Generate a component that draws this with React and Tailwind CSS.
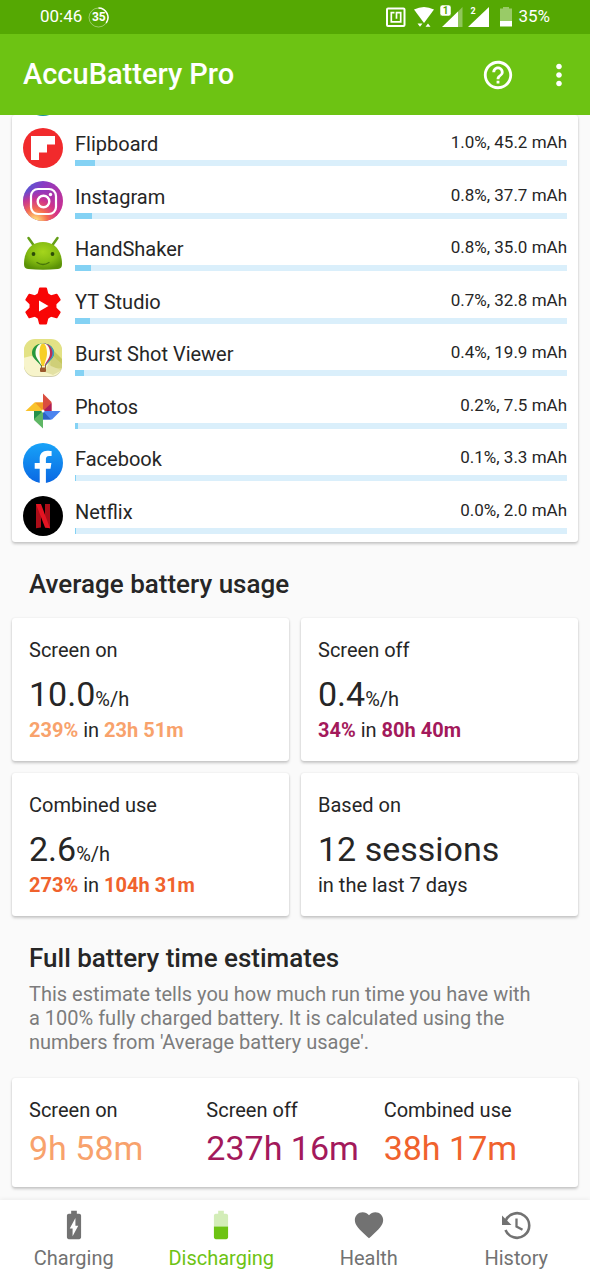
import { MdBattery50, MdBatteryChargingFull, MdFavorite, MdHelpOutline, MdMoreVert } from 'react-icons/md';

const FlipboardIcon = () => (
    <svg viewBox="0 0 40 40" className="size-10">
        <circle cx="20" cy="20" r="20" fill="#f12a2c" />
        <path d="M8 8h24v8.5h-8v8h-8V32H8z" fill="#fff" />
    </svg>
);

const InstagramIcon = () => (
    <svg viewBox="0 0 40 40" className="size-10">
        <defs>
            <linearGradient id="igBase" x1="0" y1="0.1" x2="1" y2="0.8">
                <stop offset="0" stopColor="#4a5fd8" />
                <stop offset="0.35" stopColor="#8b3ac2" />
                <stop offset="1" stopColor="#cf2f8c" />
            </linearGradient>
            <radialGradient id="igGlow" cx="0.3" cy="1.02" r="0.8">
                <stop offset="0.1" stopColor="#ffd776" />
                <stop offset="0.4" stopColor="#f9704a" stopOpacity="0.95" />
                <stop offset="0.7" stopColor="#dc3580" stopOpacity="0.8" />
                <stop offset="1" stopColor="#c32aa3" stopOpacity="0" />
            </radialGradient>
        </defs>
        <circle cx="20" cy="20" r="20" fill="url(#igBase)" />
        <circle cx="20" cy="20" r="20" fill="url(#igGlow)" />
        <rect x="8" y="8" width="25" height="25" rx="7" fill="none" stroke="#fff" strokeWidth="2.2" />
        <circle cx="20.5" cy="20.5" r="5.8" fill="none" stroke="#fff" strokeWidth="2.4" />
        <circle cx="27.5" cy="13.5" r="1.7" fill="#fff" />
    </svg>
);

const HandShakerIcon = () => (
    <svg viewBox="0 0 40 40" className="size-10">
        <defs>
            <radialGradient id="droid" cx="0.5" cy="0.35" r="0.65">
                <stop offset="0" stopColor="#a5d51c" />
                <stop offset="0.6" stopColor="#84bb12" />
                <stop offset="1" stopColor="#5b9206" />
            </radialGradient>
        </defs>
        <path d="M5.5 5l5 7M34.500 5l-5 7" stroke="#649e18" strokeWidth="2.500" strokeLinecap="round" />
        <path d="M1 31C1 17 9 9 20 9s19 8 19 22c0 3-1 4.500-4 5-10 1-20 1-30 0-3-.5-4-2-4-5z" fill="url(#droid)" />
        <circle cx="10.500" cy="21" r="1.900" fill="#2c4c08" />
        <circle cx="29.500" cy="21" r="1.900" fill="#2c4c08" />
        <path d="M14 29.500q6 4 12 0" fill="none" stroke="#47750a" strokeWidth="1.300" strokeLinecap="round" />
    </svg>
);

const StudioIcon = () => (
    <svg viewBox="0 0 40 40" className="size-10">
        <g fill="#f80606" stroke="#f80606" strokeLinejoin="round" strokeWidth="2">
            <circle cx="20" cy="20" r="12.500" />
            {[0, 60, 120].map((angle) => (
                <path key={angle} d="M17 2.500h6l2 8v19l-2 8h-6l-2-8v-19z" transform={`rotate(${angle} 20 20)`} />
            ))}
        </g>
        <path d="M16 14.500v11l9.500-5.500z" fill="#fff" />
    </svg>
);

const BurstIcon = () => (
    <svg viewBox="0 0 40 40" className="size-10">
        <defs>
            <clipPath id="burstClip"><rect x="1" y="1" width="38" height="37" rx="11" /></clipPath>
        </defs>
        <rect x="1" y="2" width="38" height="37" rx="11" fill="#cfcdb0" />
        <g clipPath="url(#burstClip)">
            <rect width="40" height="40" fill="#e3e285" />
            <path d="M29 11l11 11v8H27z" fill="#c6c85e" />
            <path d="M0 20l8-2q14 3 20 10l12 5v7H0z" fill="#f7f4cb" />
            <path d="M29 17l10 9v6l-9 5-8-3z" fill="#d6d48a" opacity="0.6" />
        </g>
        <path d="M20 5.500C12.500 5.500 9 10.500 9 15c0 5.500 6 8 9 13h4.500c3-5 8.500-7.500 8.500-13 0-4.500-3.500-9.500-11-9.500z" fill="#27983c" />
        <path d="M20 5.500c7.500 0 11 5 11 9.500 0 5.500-5.500 8-8.500 13H20z" fill="#3b9ecb" />
        <path d="M20 5.500c6.500 0 9.500 5 9.500 9.500 0 5.500-5 8-7.500 13h-2z" fill="#b92f56" />
        <path d="M20 5.500c-5 0-7.500 5-7.500 9.500 0 5.500 4.500 8 6 13h3c1.500-5 5.500-7.500 5.500-13 0-4.500-2-9.500-7-9.500z" fill="#fffdf0" />
        <path d="M20 5.500c-2.500 0-3.500 5-3.500 9.500 0 5.500 1.500 8 2 13h2.500c1-5 3-7.500 3-13 0-4.500-1.500-9.500-4-9.500z" fill="#f7cf25" />
        <path d="M18.500 27v3M22.500 27v3" stroke="#8b6a3f" />
        <rect x="17" y="29.500" width="6" height="4.500" rx="1" fill="#9b592d" />
    </svg>
);

const PhotosIcon = () => (
    <svg viewBox="0 0 40 40" className="size-10">
        <path d="M20 20V2.500l8.500 8.500v9z" fill="#da4d3f" />
        <path d="M20 20l8.500-8v8z" fill="#ad1d58" />
        <path d="M20 20h17.500L29 28.500h-9z" fill="#4c84ee" />
        <path d="M20 20l8 8.500h-8z" fill="#2c63c5" />
        <path d="M20 20v17.500L11 29v-9z" fill="#5fb765" />
        <path d="M20 20l-9 8v-8z" fill="#23904b" />
        <path d="M20 20H2.500l9-8.500H20z" fill="#fac32b" />
        <path d="M20 20l-8-8.500h8z" fill="#f19a24" />
        <circle cx="20" cy="20" r="1.500" fill="#fff" />
    </svg>
);

const FacebookIcon = () => (
    <svg viewBox="0 0 40 40" className="size-10">
        <defs>
            <linearGradient id="fb" x1="0" y1="0" x2="0" y2="1">
                <stop offset="0" stopColor="#18a3f8" />
                <stop offset="1" stopColor="#0a68e3" />
            </linearGradient>
        </defs>
        <circle cx="20" cy="20" r="20" fill="url(#fb)" />
        <path d="M16.700 40V25.800h-5V20h5v-4.500c0-5 3-7.800 7.500-7.800 2.200 0 4.400.4 4.400.4v5h-2.500c-2.500 0-3.200 1.500-3.200 3.100V20h5.500l-.9 5.800h-4.600V40q-3 .4-6.200 0z" fill="#fff" />
    </svg>
);

const NetflixIcon = () => (
    <svg viewBox="0 0 40 40" className="size-10">
        <circle cx="20" cy="20" r="20" fill="#000" />
        <path d="M13 8h5v23.500l-5 .7zM22 8h5v24.200l-5-.7z" fill="#ab0d18" />
        <path d="M13 8h5l9 24.200-5-.7z" fill="#e41422" />
    </svg>
);

const HistoryIcon = () => (
    <svg viewBox="0 0 34 34" className="size-[34px]">
        <path d="M6.500 13A12.300 12.300 0 1 1 6.500 22" fill="none" stroke="#727272" strokeWidth="2.600" />
        <path d="M3 7.500v9.500h9.500z" fill="#727272" />
        <path d="M17.500 10.500v8l6 3.300" fill="none" stroke="#727272" strokeWidth="2.300" />
    </svg>
);

const apps = [
    { name: 'Flipboard', usage: '1.0%, 45.2 mAh', fill: 20, Icon: FlipboardIcon },
    { name: 'Instagram', usage: '0.8%, 37.7 mAh', fill: 17, Icon: InstagramIcon },
    { name: 'HandShaker', usage: '0.8%, 35.0 mAh', fill: 16, Icon: HandShakerIcon },
    { name: 'YT Studio', usage: '0.7%, 32.8 mAh', fill: 15, Icon: StudioIcon },
    { name: 'Burst Shot Viewer', usage: '0.4%, 19.9 mAh', fill: 9, Icon: BurstIcon },
    { name: 'Photos', usage: '0.2%, 7.5 mAh', fill: 3, Icon: PhotosIcon },
    { name: 'Facebook', usage: '0.1%, 3.3 mAh', fill: 1, Icon: FacebookIcon },
    { name: 'Netflix', usage: '0.0%, 2.0 mAh', fill: 1, Icon: NetflixIcon },
];

const averages = [
    { label: 'Screen on', value: '10.0', percent: '239%', time: '23h 51m', color: 'text-[#f8a26c]' },
    { label: 'Screen off', value: '0.4', percent: '34%', time: '80h 40m', color: 'text-[#a3195b]' },
    { label: 'Combined use', value: '2.6', percent: '273%', time: '104h 31m', color: 'text-[#f0622d]' },
];

const estimates = [
    { label: 'Screen on', value: '9h 58m', color: 'text-[#f8a26c]' },
    { label: 'Screen off', value: '237h 16m', color: 'text-[#a3195b]' },
    { label: 'Combined use', value: '38h 17m', color: 'text-[#f0622d]' },
];

const tabs = [
    { label: 'Charging', icon: <MdBatteryChargingFull size={34} /> },
    { label: 'Discharging', icon: <MdBattery50 size={34} />, active: true },
    { label: 'Health', icon: <MdFavorite size={34} /> },
    { label: 'History', icon: <HistoryIcon /> },
];

function Card({ className = '', children }) {
    return (
        <div className={`bg-white rounded-[3px] shadow-[0_2px_3px_rgba(0,0,0,0.2),0_0_2px_rgba(0,0,0,0.1)] ${className}`}>
            {children}
        </div>
    );
}

function StatusBar() {
    return (
        <div className="h-[34px] bg-[#55a803] text-white flex items-center justify-between px-10">
            <div className="flex items-center gap-1.5 text-[17px]">
                <span>00:46</span>
                <span className="relative flex size-[21px] items-center justify-center text-[12px] font-bold">
                    <svg viewBox="0 0 21 21" className="absolute inset-0">
                        <circle cx="10.500" cy="10.500" r="9.500" fill="none" stroke="#fff" strokeOpacity="0.4" />
                        <path d="M10.500 1A9.500 9.500 0 0 1 18.200 16" fill="none" stroke="#fff" strokeWidth="1.500" />
                    </svg>
                    35
                </span>
            </div>
            <div className="flex items-center">
                {/* NFC, wifi, both SIMs, battery */}
                <svg viewBox="0 0 128 26" className="w-32 h-[26px]" fill="#fff">
                    <rect x="1" y="4.500" width="17.500" height="17.500" rx="1" fill="none" stroke="#fff" strokeWidth="2" />
                    <path d="M8.500 8.700H5.300v9.200h9.400V8.700H10.500v6" fill="none" stroke="#fff" strokeWidth="1.700" />
                    <path d="M28 5.500q10-5 20 0L38 19z" />
                    <path d="M31.500 19.500h5l-2.500 3.200zM39.500 22.700h5L42 19.500z" />
                    <path d="M76.500 3v20H57z" opacity="0.35" />
                    <path d="M72 7.500V23H56z" />
                    <rect x="54" y="1" width="11" height="11" rx="2.500" stroke="#55a803" strokeWidth="0.500" />
                    <text x="59.500" y="10" textAnchor="middle" fontSize="10" fontWeight="700" fill="#55a803">1</text>
                    <path d="M103 3v20H82z" />
                    <text x="87" y="10" textAnchor="middle" fontSize="9" fontWeight="700">2</text>
                    <path d="M114 4.500h3V3h6v1.500h3V17h-12V4.500z" opacity="0.4" />
                    <path d="M114 17h12v5.500h-12z" />
                </svg>
                <span className="ml-1 text-[17px]">35%</span>
            </div>
        </div>
    );
}

export default function App() {
    return (
        <div className="min-h-screen flex flex-col bg-[#fafafa] text-[#262626] font-[Roboto,sans-serif]">
            <header className="sticky top-0 z-10">
                <StatusBar />
                <div className="h-[81px] bg-[#6dc313] text-white flex items-center pl-[23px] pr-[14px]">
                    <h1 className="flex-1 text-[29px] font-medium">AccuBattery Pro</h1>
                    <div className="flex items-center gap-[27px]">
                        <button aria-label="Help"><MdHelpOutline size={34} /></button>
                        <button aria-label="More options"><MdMoreVert size={34} /></button>
                    </div>
                </div>
            </header>

            <main className="flex-1 px-3">
                <Card className="px-[11px]">
                    {/* the row above is scrolled under the toolbar */}
                    <div className="h-px mb-1.5 flex items-end overflow-hidden">
                        <div className="size-10 shrink-0 rounded-full bg-[#16929a]"></div>
                    </div>
                    <ul className="grid auto-rows-fr min-h-[420px]">
                        {apps.map(({ name, usage, fill, Icon }) => (
                            <li key={name} className="flex items-start gap-3 pt-1.5">
                                <Icon />
                                <div className="flex-1">
                                    <div className="flex items-start justify-between h-8">
                                        <span className="text-[20px] leading-8">{name}</span>
                                        <span className="text-[17px] leading-7">{usage}</span>
                                    </div>
                                    <div className="h-1.5 bg-[#daeffb]">
                                        <div className="h-full bg-[#84d2f4]" style={{ width: `${(fill / 492) * 100}%` }}></div>
                                    </div>
                                </div>
                            </li>
                        ))}
                    </ul>
                </Card>

                <h2 className="mt-6 px-[17px] text-[26px] leading-9 font-medium">Average battery usage</h2>
                <div className="mt-4 grid grid-cols-2 gap-3">
                    {averages.map((item) => (
                        <Card key={item.label} className="min-h-[143px] px-[17px] pt-5">
                            <p className="text-[20px] leading-6">{item.label}</p>
                            <p className="mt-3 text-[34px] leading-10">
                                {item.value}<span className="text-[20px] leading-none">%/h</span>
                            </p>
                            <p className="mt-1 text-[20px] leading-6">
                                <b className={item.color}>{item.percent}</b> in <b className={item.color}>{item.time}</b>
                            </p>
                        </Card>
                    ))}
                    <Card className="min-h-[143px] px-[17px] pt-5">
                        <p className="text-[20px] leading-6">Based on</p>
                        <p className="mt-3 text-[34px] leading-10">12 sessions</p>
                        <p className="mt-1 text-[20px] leading-6">in the last 7 days</p>
                    </Card>
                </div>

                <h2 className="mt-6 px-[17px] text-[26px] leading-9 font-medium">Full battery time estimates</h2>
                <p className="mt-1.5 pl-[17px] pr-9 text-[20px] leading-6 text-[#7c7c7c]">
                    This estimate tells you how much run time you have with a 100% fully charged battery. It is calculated using the numbers from 'Average battery usage'.
                </p>
                <Card className="mt-6 mb-3 min-h-[109px] px-[17px] pt-5 grid grid-cols-3">
                    {estimates.map((item) => (
                        <div key={item.label} className="whitespace-nowrap">
                            <p className="text-[20px] leading-6">{item.label}</p>
                            <p className={`text-[34px] leading-[52px] ${item.color}`}>{item.value}</p>
                        </div>
                    ))}
                </Card>
            </main>

            <nav className="sticky bottom-0 z-10 h-20 bg-white grid grid-cols-4 shadow-[0_-1px_4px_rgba(0,0,0,0.06)]">
                {tabs.map(({ label, icon, active }) => (
                    <a
                        key={label}
                        href="#"
                        className={`flex flex-col items-center pt-2 ${active ? 'text-[#6dc313]' : 'text-[#727272]'}`}
                    >
                        {icon}
                        <span className="text-[20px] leading-8">{label}</span>
                    </a>
                ))}
            </nav>
        </div>
    );
}
